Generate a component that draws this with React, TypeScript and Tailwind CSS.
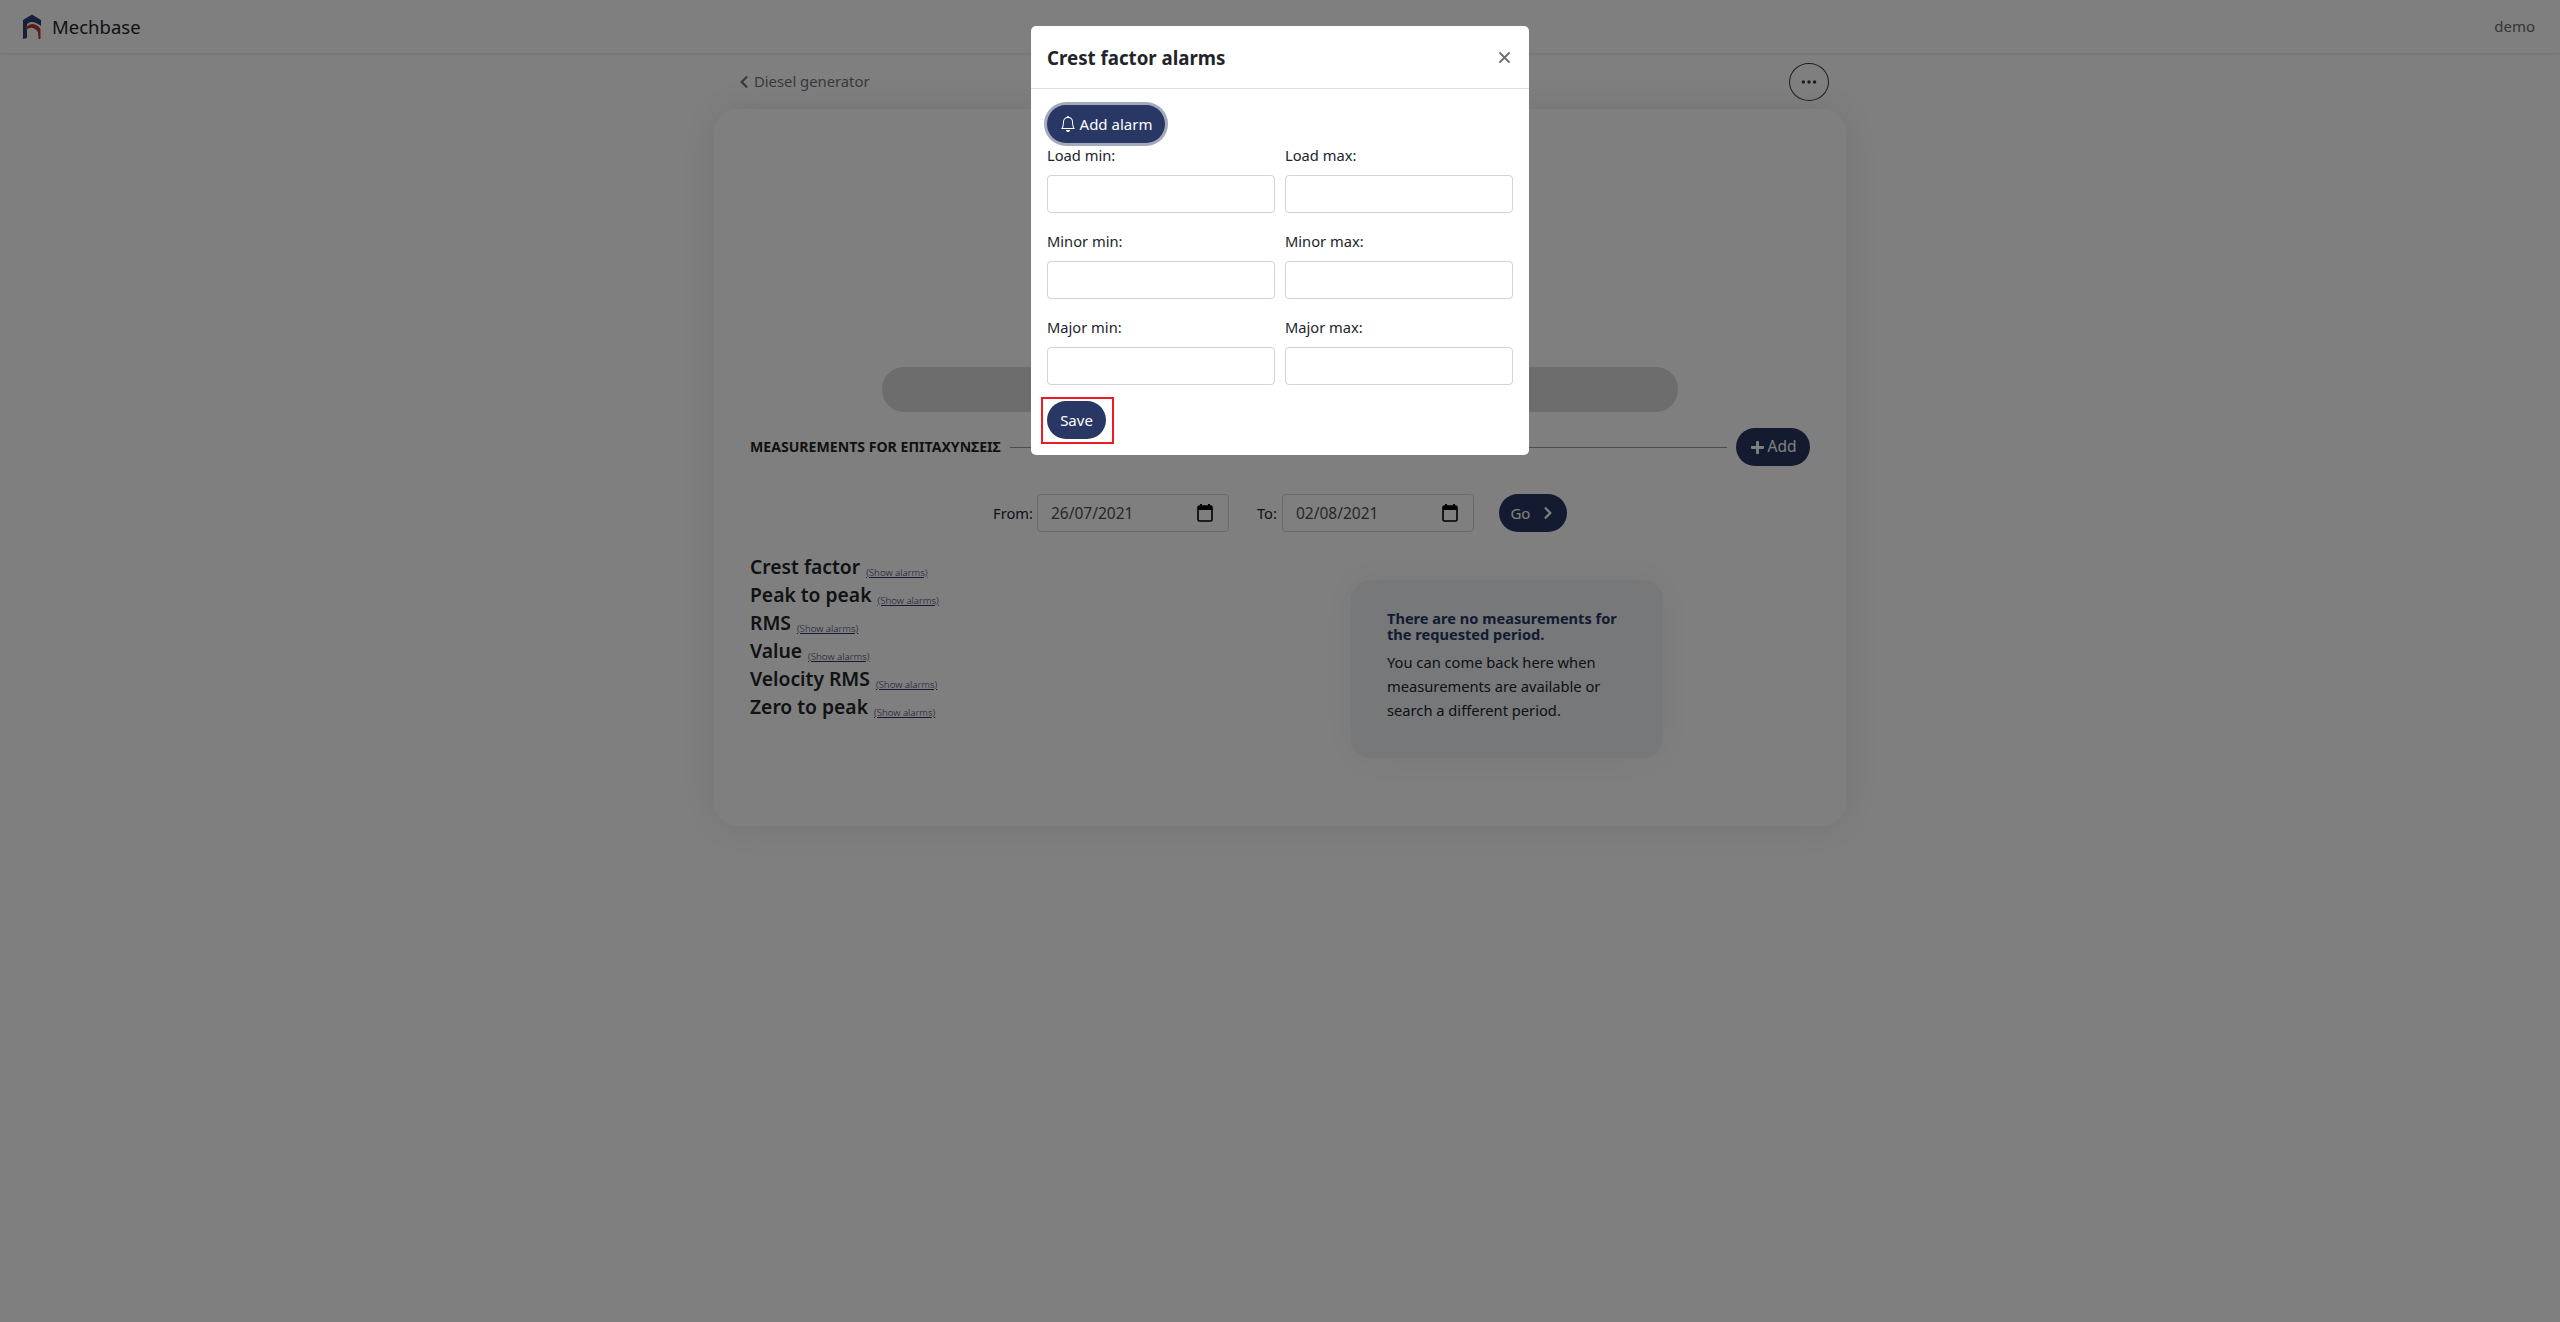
import React from "react";
import { BsBell, BsThreeDots } from "react-icons/bs";
import { FaChevronLeft, FaChevronRight, FaPlus } from "react-icons/fa";

const font = { fontFamily: '"Noto Sans", "Open Sans", sans-serif' };

function Logo() {
  return (
    <svg width="20" height="26" viewBox="0 0 20 26" className="shrink-0">
      <path d="M1 6 L10 0.5 L19 6 L19 12 Q10 5 5 10 L5 24 L1 25 Z" fill="#2c3f78" />
      <path d="M3 16 Q4 11 10 10 Q15 10 18.5 15 L18.5 25 L16.5 25 L16 18 Q12 13 8 14 Q5 15 3 16 Z" fill="#b5392f" />
    </svg>
  );
}

function Calendar() {
  return (
    <svg width="16" height="18" viewBox="0 0 16 18" className="shrink-0">
      <rect x="3" y="0" width="2" height="3" fill="#000" />
      <rect x="11" y="0" width="2" height="3" fill="#000" />
      <rect x="1" y="2" width="14" height="15" rx="1.5" fill="none" stroke="#000" strokeWidth="1.6" />
      <rect x="1" y="2" width="14" height="4" fill="#000" />
    </svg>
  );
}

function DateBox({ value }: { value: string }) {
  return (
    <div className="flex h-[38px] w-[192px] items-center justify-between rounded border border-[#ced4da] bg-white pl-[13px] pr-[15px] text-[15.5px] text-[#495057]">
      <span className="pt-[2px]">{value}</span>
      <Calendar />
    </div>
  );
}

function Metric({ name }: { name: string }) {
  return (
    <div className="flex h-[28px] items-baseline gap-[6px] whitespace-nowrap">
      <span className="text-[19.3px] font-semibold leading-[28px] text-[#212529]">{name}</span>
      <a className="translate-y-[2px] text-[9.7px] font-light leading-none text-[#283665] underline">(Show alarms)</a>
    </div>
  );
}

function Field({ label }: { label: string }) {
  return (
    <div className="flex h-[86px] w-[228px] flex-col">
      <label className="h-[32px] text-[14.7px] leading-[24px] text-[#212529]">{label}</label>
      <input className="h-[38px] w-full rounded border border-[#ced4da] bg-white" />
    </div>
  );
}

export default function App() {
  const metrics = ["Crest factor", "Peak to peak", "RMS", "Value", "Velocity RMS", "Zero to peak"];
  return (
    <div style={font} className="relative h-[1322px] overflow-hidden bg-white">
      <nav className="flex h-[53px] items-center justify-between bg-white pl-[22px] pr-[25px] shadow-[0_1px_3px_rgba(0,0,0,0.12)]">
        <div className="flex items-center gap-[10px]">
          <Logo />
          <span className="text-[18.5px] text-[#212529]">Mechbase</span>
        </div>
        <span className="text-[15px] text-[#6c6c6c]">demo</span>
      </nav>

      <main className="mx-auto w-[1132px]">
        <div className="flex h-[56px] items-center justify-between pl-[23px] pr-[17px] pt-[1px]">
          <a className="flex items-center gap-[3px] text-[14.8px] text-[#6c757d]">
            <FaChevronLeft className="text-[14px]" />
            Diesel generator
          </a>
          <button className="flex h-[38px] w-[40px] items-center justify-center rounded-[50%] border border-[#343a40] text-[#343a40]">
            <BsThreeDots className="text-[18px]" />
          </button>
        </div>

        <section className="h-[717px] rounded-[24px] bg-white px-[36px] pt-[258px] shadow-[0_0_40px_rgba(0,0,0,0.1)]">
          <div className="mx-auto h-[45px] w-[796px] rounded-[22px] bg-[#dadada]" />

          <div className="mt-[16px] flex h-[38px] items-center gap-[9px]">
            <h2 className="whitespace-nowrap text-[14.1px] font-bold uppercase text-[#212529]">Measurements for επιταχυνσεισ</h2>
            <div className="h-px flex-1 bg-[#9a9a9a]" />
            <button className="flex h-[38px] w-[74px] items-center justify-center gap-[3px] rounded-[19px] bg-[#283763] text-[15.5px] text-white">
              <FaPlus className="text-[15px]" />
              Add
            </button>
          </div>

          <div className="mt-[28px] flex h-[38px] items-center justify-center">
            <span className="mr-[4px] text-[14.7px] text-[#212529]">From:</span>
            <DateBox value="26/07/2021" />
            <span className="ml-[28px] mr-[5px] text-[14.7px] text-[#212529]">To:</span>
            <DateBox value="02/08/2021" />
            <button className="ml-[25px] flex h-[38px] w-[68px] items-center justify-center gap-[11px] rounded-[19px] bg-[#283763] text-[15px] text-white">
              Go
              <FaChevronRight className="text-[14px]" />
            </button>
          </div>

          <div className="flex items-start">
            <div className="mt-[21px] w-[601px]">
              {metrics.map((m) => (
                <Metric key={m} name={m} />
              ))}
            </div>
            <div className="mt-[48px] h-[178px] w-[312px] rounded-[20px] bg-[#eef0f4] px-[36px] pt-[30px] shadow-[0_0_40px_rgba(0,0,0,0.06)]">
              <h3 className="text-[14.6px] font-bold leading-[16px] text-[#283763]">There are no measurements for the requested period.</h3>
              <p className="mt-[8px] text-[14.7px] leading-[24px] text-[#212529]">
                You can come back here when measurements are available or search a different period.
              </p>
            </div>
          </div>
        </section>
      </main>

      <div className="fixed inset-0 bg-black/50">
        <div className="ml-[1031px] mt-[26px] h-[429px] w-[498px] rounded-[5px] bg-white">
          <header className="flex h-[63px] items-center justify-between border-b border-[#dee2e6] pl-[16px] pr-[19px]">
            <h1 className="pt-[2px] text-[18.7px] font-bold text-[#212529]">Crest factor alarms</h1>
            <svg width="11" height="11" viewBox="0 0 11 11">
              <path d="M1 1 L10 10 M10 1 L1 10" stroke="#6e6e6e" strokeWidth="1.8" strokeLinecap="round" />
            </svg>
          </header>
          <div className="px-[16px] pt-[16px]">
            <button className="flex h-[38px] w-[118px] items-center justify-center gap-[4px] rounded-[19px] bg-[#283763] text-[15px] text-white ring-[3px] ring-[#a3aabc]">
              <BsBell className="text-[16px]" />
              Add alarm
            </button>
            <div className="flex flex-wrap gap-x-[10px]">
              {["Load min:", "Load max:", "Minor min:", "Minor max:", "Major min:", "Major max:"].map((l) => (
                <Field key={l} label={l} />
              ))}
            </div>
            <div className="relative w-[59px]">
              <button className="h-[38px] w-[59px] rounded-[19px] bg-[#283763] text-[15px] text-white">Save</button>
              <span className="absolute -bottom-[5px] -left-[6px] -right-[8px] -top-[4px] border-2 border-[#ed1c24]" />
            </div>
          </div>
        </div>
      </div>
    </div>
  );
}
